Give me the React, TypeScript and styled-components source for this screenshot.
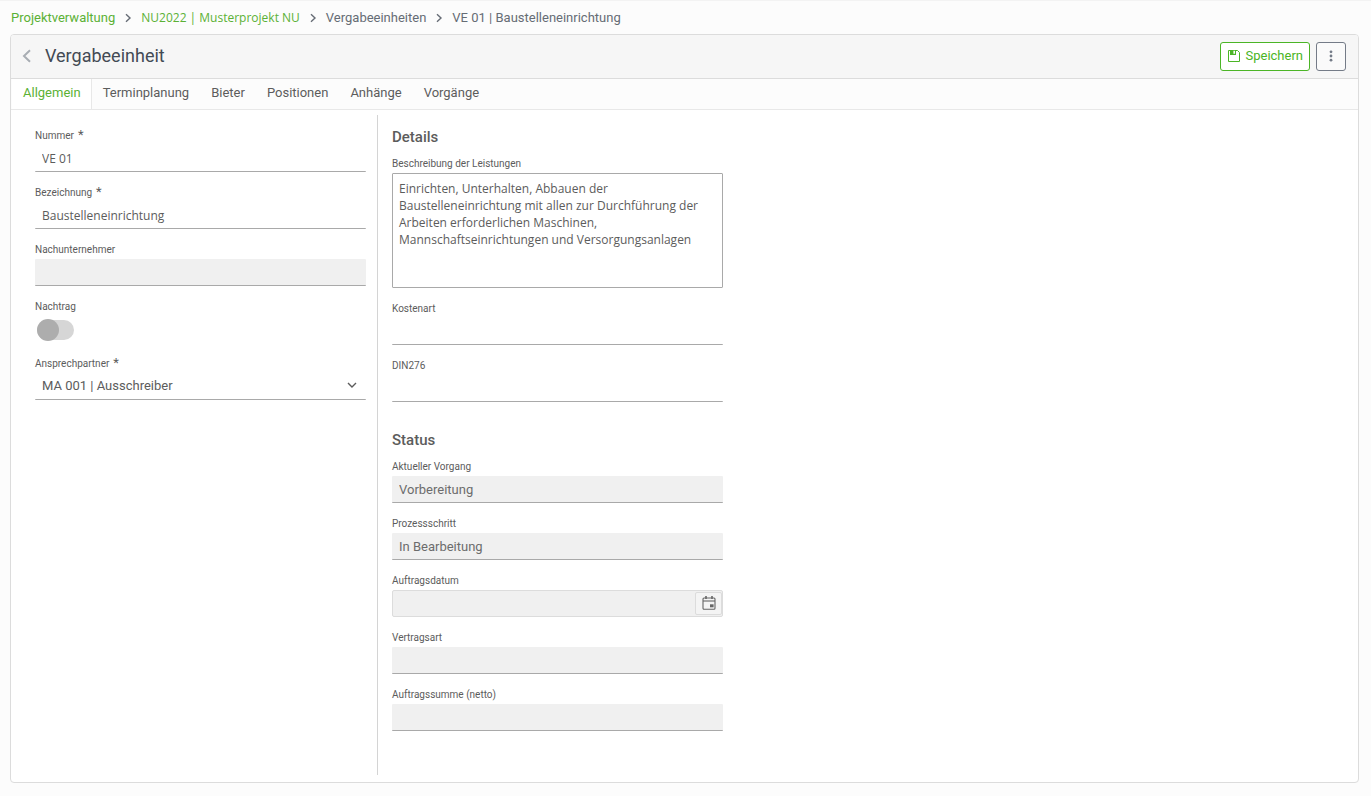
import React, { useState } from "react";
import styled, { createGlobalStyle, css } from "styled-components";

const roboto = 'Roboto, "Liberation Sans", sans-serif';
const humanist = css`
  font-family: "Open Sans", "Noto Sans", sans-serif;
  font-size: 12px;
`;

const color = {
  green: "#5bb135",
  buttonGreen: "#4bb526",
  text: "#5c5c5c",
  crumb: "#666c75",
  title: "#434a54",
  line: "#dcdcdc",
  fieldLine: "#a9a9a9",
  disabled: "#f0f0f0",
};

const GlobalStyle = createGlobalStyle`
  *, *::before, *::after { box-sizing: border-box; }
  body {
    margin: 0;
    background: #fcfcfc;
    color: ${color.text};
    font: 13px/18px ${roboto};
  }
  button, input, select, textarea { font: inherit; color: inherit; margin: 0; }
`;

const Page = styled.div`
  min-height: 100vh;
  display: flex;
  flex-direction: column;
  border-top: 1px solid #f3f3f3;
  padding: 0 12px 13px 10px;
`;

const Breadcrumb = styled.nav`
  display: flex;
  align-items: center;
  height: 33px;
  padding-left: 1px;
  gap: 8px;
  color: ${color.crumb};
  white-space: nowrap;
`;

const CrumbLink = styled.a<{ $humanist?: boolean; $muted?: boolean }>`
  color: ${(p) => (p.$muted ? color.crumb : color.green)};
  text-decoration: none;
  ${(p) => p.$humanist && humanist}
`;

const Panel = styled.main`
  flex: 1;
  display: flex;
  flex-direction: column;
  background: #fff;
  border: 1px solid ${color.line};
  border-radius: 4px;
  overflow: hidden;
`;

const PanelHeader = styled.header`
  display: flex;
  align-items: center;
  height: 44px;
  padding: 0 12px 0 10px;
  background: #f6f6f6;
  border-bottom: 1px solid ${color.line};
`;

const BackButton = styled.button`
  display: flex;
  padding: 0 0 2px;
  border: 0;
  background: none;
  color: #a8adb3;
`;

const Title = styled.h1`
  flex: 1;
  margin: 0 0 0 12px;
  padding-bottom: 2px;
  font-size: 18px;
  line-height: 24px;
  font-weight: 400;
  color: ${color.title};
`;

const Actions = styled.div`
  display: flex;
  gap: 6px;
`;

const ActionButton = styled.button<{ $primary?: boolean }>`
  display: flex;
  align-items: center;
  justify-content: center;
  gap: 4px;
  min-width: 30px;
  height: 29px;
  padding: 0 6px 2px;
  border: 1px solid ${(p) => (p.$primary ? color.buttonGreen : "#747b87")};
  border-radius: 3px;
  background: ${(p) => (p.$primary ? "#fff" : "#fafafa")};
  color: ${(p) => (p.$primary ? color.buttonGreen : "#747b87")};
`;

const TabBar = styled.div`
  display: flex;
  height: 31px;
  padding-left: 1px;
  background: #fcfcfc;
  border-bottom: 1px solid #e8e8e8;
`;

const Tab = styled.button<{ $active?: boolean }>`
  padding: 0 11px 3px;
  border: 0;
  background: ${(p) => (p.$active ? "#fff" : "none")};
  color: ${(p) => (p.$active ? color.green : color.text)};
  ${(p) => p.$active && css`border-right: 1px solid #e8e8e8; padding-right: 10px;`}
`;

const Body = styled.div`
  flex: 1;
  display: grid;
  grid-template-columns: 367fr 345fr 635fr;
  padding: 5px 0 7px;
`;

const MainColumn = styled.section`
  display: flex;
  flex-direction: column;
  gap: 14px;
  padding: 14px 11px 0 24px;
  border-right: 1px solid #d4d4d4;
`;

const SideColumn = styled.div`
  display: flex;
  flex-direction: column;
  gap: 29px;
  padding: 13px 0 0 14px;
`;

const Group = styled.section`
  display: flex;
  flex-direction: column;
  gap: 14px;
`;

const GroupTitle = styled.h2`
  margin: 0 0 -3px;
  font-size: 15px;
  line-height: 18px;
  font-weight: 500;
`;

const FieldBox = styled.div`
  display: flex;
  flex-direction: column;
  gap: 2px;
`;

const Label = styled.label`
  font-size: 10px;
  line-height: 14px;
`;

const Required = styled.span`
  font-size: 13px;
  line-height: 0;
  margin-left: 4px;
`;

const control = css`
  width: 100%;
  height: 27px;
  padding: 0 7px;
  border: 0;
  border-bottom: 1px solid ${color.fieldLine};
  border-radius: 1px;
  background: #fff;
  outline: 0;
`;

const TextInput = styled.input<{ $humanist?: boolean }>`
  ${control}
  ${(p) => p.$humanist && humanist}
  &:disabled { background: ${color.disabled}; color: #6c6c6c; }
`;

const TextArea = styled.textarea`
  ${humanist}
  display: block;
  width: 100%;
  height: 115px;
  padding: 6px;
  border: 1px solid ${color.fieldLine};
  border-radius: 1px;
  resize: none;
  outline: 0;
  line-height: 17px;
`;

const SelectBox = styled.div`
  position: relative;
  svg {
    position: absolute;
    right: 9px;
    top: 7px;
    pointer-events: none;
  }
`;

const Select = styled.select`
  ${control}
  display: block;
  appearance: none;
`;

const SwitchRow = styled.div`
  display: flex;
  align-items: center;
  height: 27px;
  padding-left: 2px;
`;

const Switch = styled.input`
  appearance: none;
  display: flex;
  align-items: center;
  width: 37px;
  height: 20px;
  border-radius: 10px;
  background: #d6d6d6;
  &::before {
    content: "";
    flex: none;
    width: 22px;
    height: 22px;
    border-radius: 50%;
    background: #adadad;
  }
  &:checked { justify-content: flex-end; }
`;

const DateBox = styled.div`
  display: flex;
  height: 27px;
  padding: 1px 0;
  border: 1px solid ${color.line};
  border-radius: 2px;
  background: ${color.disabled};
`;

const DateInput = styled.input`
  flex: 1;
  min-width: 0;
  padding: 0 6px;
  border: 0;
  background: transparent;
`;

const DateButton = styled.button`
  display: flex;
  align-items: center;
  justify-content: center;
  width: 27px;
  padding: 0 0 1px;
  border: 1px solid ${color.line};
  border-radius: 2px;
  background: #f4f4f4;
  color: #666;
`;

const ChevronRight = () => (
  <svg width="10" height="10" viewBox="0 0 10 10" fill="none" stroke="#666c75" strokeWidth="1.4" aria-hidden="true">
    <path d="M3 1.2 7 5 3 8.8" />
  </svg>
);

const ChevronLeft = () => (
  <svg width="12" height="14" viewBox="0 0 12 14" fill="none" stroke="currentColor" strokeWidth="2" aria-hidden="true">
    <path d="M9 1.2 3 7l6 5.8" />
  </svg>
);

const ChevronDown = () => (
  <svg width="10" height="10" viewBox="0 0 10 10" fill="none" stroke="#5c5c5c" strokeWidth="1.4" aria-hidden="true">
    <path d="M1 3 5 7l4-4" />
  </svg>
);

const SaveIcon = () => (
  <svg width="14" height="14" viewBox="0 0 14 14" fill="none" stroke="currentColor" aria-hidden="true">
    <path d="M1.5 1.5h9l2 2v9h-11z" />
    <path d="M3 1h6v5H3z" fill="currentColor" stroke="none" />
    <path d="M6.4 1.8h1.6v3H6.4z" fill="#fff" stroke="none" />
  </svg>
);

const DotsIcon = () => (
  <svg width="4" height="14" viewBox="0 0 4 14" fill="currentColor" aria-hidden="true">
    <circle cx="2" cy="2.8" r="1.4" />
    <circle cx="2" cy="7" r="1.4" />
    <circle cx="2" cy="11.2" r="1.4" />
  </svg>
);

const CalendarIcon = () => (
  <svg width="14" height="14" viewBox="0 0 14 14" fill="none" stroke="currentColor" aria-hidden="true">
    <rect x="1" y="2" width="12" height="11.3" rx="1" strokeWidth="1.1" />
    <path d="M1 5h12" strokeWidth="1.1" />
    <path d="M4 0v3M10 0v3" strokeWidth="1.6" />
    <path d="M8 8.3h3.6v3H8z" fill="currentColor" stroke="none" />
  </svg>
);

interface FieldProps {
  id: string;
  label: string;
  required?: boolean;
  children: React.ReactNode;
}

const Field = ({ id, label, required, children }: FieldProps) => (
  <FieldBox>
    <Label htmlFor={id}>
      {label}
      {required && <Required>*</Required>}
    </Label>
    {children}
  </FieldBox>
);

const tabs = ["Allgemein", "Terminplanung", "Bieter", "Positionen", "Anhänge", "Vorgänge"];

export default function App() {
  const [active, setActive] = useState(tabs[0]);

  return (
    <>
      <GlobalStyle />
      <Page>
        <Breadcrumb aria-label="Breadcrumb">
          <CrumbLink href="#projekte">Projektverwaltung</CrumbLink>
          <ChevronRight />
          <CrumbLink href="#projekt" $humanist>NU2022 | Musterprojekt NU</CrumbLink>
          <ChevronRight />
          <CrumbLink href="#einheiten" $muted>Vergabeeinheiten</CrumbLink>
          <ChevronRight />
          <span>VE 01 | Baustelleneinrichtung</span>
        </Breadcrumb>
        <Panel>
          <PanelHeader>
            <BackButton aria-label="Zurück"><ChevronLeft /></BackButton>
            <Title>Vergabeeinheit</Title>
            <Actions>
              <ActionButton $primary><SaveIcon />Speichern</ActionButton>
              <ActionButton aria-label="Weitere Aktionen"><DotsIcon /></ActionButton>
            </Actions>
          </PanelHeader>
          <TabBar role="tablist">
            {tabs.map((tab) => (
              <Tab key={tab} role="tab" aria-selected={tab === active} $active={tab === active} onClick={() => setActive(tab)}>
                {tab}
              </Tab>
            ))}
          </TabBar>
          <Body>
            <MainColumn>
              <Field id="nummer" label="Nummer" required>
                <TextInput id="nummer" $humanist defaultValue="VE 01" />
              </Field>
              <Field id="bezeichnung" label="Bezeichnung" required>
                <TextInput id="bezeichnung" $humanist defaultValue="Baustelleneinrichtung" />
              </Field>
              <Field id="nachunternehmer" label="Nachunternehmer">
                <TextInput id="nachunternehmer" disabled />
              </Field>
              <Field id="nachtrag" label="Nachtrag">
                <SwitchRow><Switch id="nachtrag" type="checkbox" role="switch" /></SwitchRow>
              </Field>
              <Field id="partner" label="Ansprechpartner" required>
                <SelectBox>
                  <Select id="partner">
                    <option>MA 001 | Ausschreiber</option>
                  </Select>
                  <ChevronDown />
                </SelectBox>
              </Field>
            </MainColumn>
            <SideColumn>
              <Group>
                <GroupTitle>Details</GroupTitle>
                <Field id="beschreibung" label="Beschreibung der Leistungen">
                  <TextArea
                    id="beschreibung"
                    spellCheck={false}
                    defaultValue="Einrichten, Unterhalten, Abbauen der Baustelleneinrichtung mit allen zur Durchführung der Arbeiten erforderlichen Maschinen, Mannschaftseinrichtungen und Versorgungsanlagen"
                  />
                </Field>
                <Field id="kostenart" label="Kostenart">
                  <TextInput id="kostenart" />
                </Field>
                <Field id="din" label="DIN276">
                  <TextInput id="din" />
                </Field>
              </Group>
              <Group>
                <GroupTitle>Status</GroupTitle>
                <Field id="vorgang" label="Aktueller Vorgang">
                  <TextInput id="vorgang" defaultValue="Vorbereitung" disabled />
                </Field>
                <Field id="schritt" label="Prozessschritt">
                  <TextInput id="schritt" defaultValue="In Bearbeitung" disabled />
                </Field>
                <Field id="datum" label="Auftragsdatum">
                  <DateBox>
                    <DateInput id="datum" disabled />
                    <DateButton aria-label="Kalender öffnen" disabled><CalendarIcon /></DateButton>
                  </DateBox>
                </Field>
                <Field id="vertragsart" label="Vertragsart">
                  <TextInput id="vertragsart" disabled />
                </Field>
                <Field id="summe" label="Auftragssumme (netto)">
                  <TextInput id="summe" disabled />
                </Field>
              </Group>
            </SideColumn>
          </Body>
        </Panel>
      </Page>
    </>
  );
}
